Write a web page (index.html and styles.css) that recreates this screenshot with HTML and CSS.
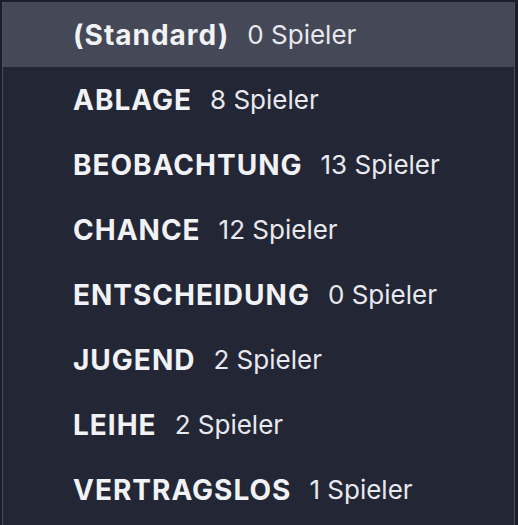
FILE: index.html
```html
<!DOCTYPE html>
<html lang="de">
<head>
<meta charset="utf-8">
<link rel="stylesheet" href="styles.css">
</head>
<body>
<div class="frame">
  <ul class="menu">
    <li class="item active"><span class="label">(Standard)</span><span class="count">0 Spieler</span></li>
    <li class="item"><span class="label">ABLAGE</span><span class="count">8 Spieler</span></li>
    <li class="item"><span class="label">BEOBACHTUNG</span><span class="count">13 Spieler</span></li>
    <li class="item"><span class="label">CHANCE</span><span class="count">12 Spieler</span></li>
    <li class="item"><span class="label">ENTSCHEIDUNG</span><span class="count">0 Spieler</span></li>
    <li class="item"><span class="label">JUGEND</span><span class="count">2 Spieler</span></li>
    <li class="item"><span class="label">LEIHE</span><span class="count">2 Spieler</span></li>
    <li class="item"><span class="label">VERTRAGSLOS</span><span class="count">1 Spieler</span></li>
  </ul>
</div>
</body>
</html>
```
FILE: styles.css
```css
html, body {
  margin: 0;
  padding: 0;
  height: 100%;
  background: #1b1e2a;
}
body {
  font-family: Inter, "Noto Sans", "Liberation Sans", sans-serif;
  overflow: hidden;
}
.frame {
  padding: 2px 3px 0 2px;
  height: 100%;
  box-sizing: border-box;
}
.menu {
  list-style: none;
  margin: 0;
  padding: 0;
  height: 100%;
  background: #232635;
  border-left: 1px solid #4a4d5a;
  border-right: 1px solid #4a4d5a;
}
.item {
  display: flex;
  align-items: center;
  height: 65px;
  padding-left: 70px;
  gap: 18px;
  color: #f1f2f5;
}
.item.active {
  background: #454856;
}
.label {
  font-weight: 700;
  font-size: 28px;
  letter-spacing: 1px;
}
.count {
  font-weight: 400;
  font-size: 26px;
  color: #e8e9ee;
}
```
